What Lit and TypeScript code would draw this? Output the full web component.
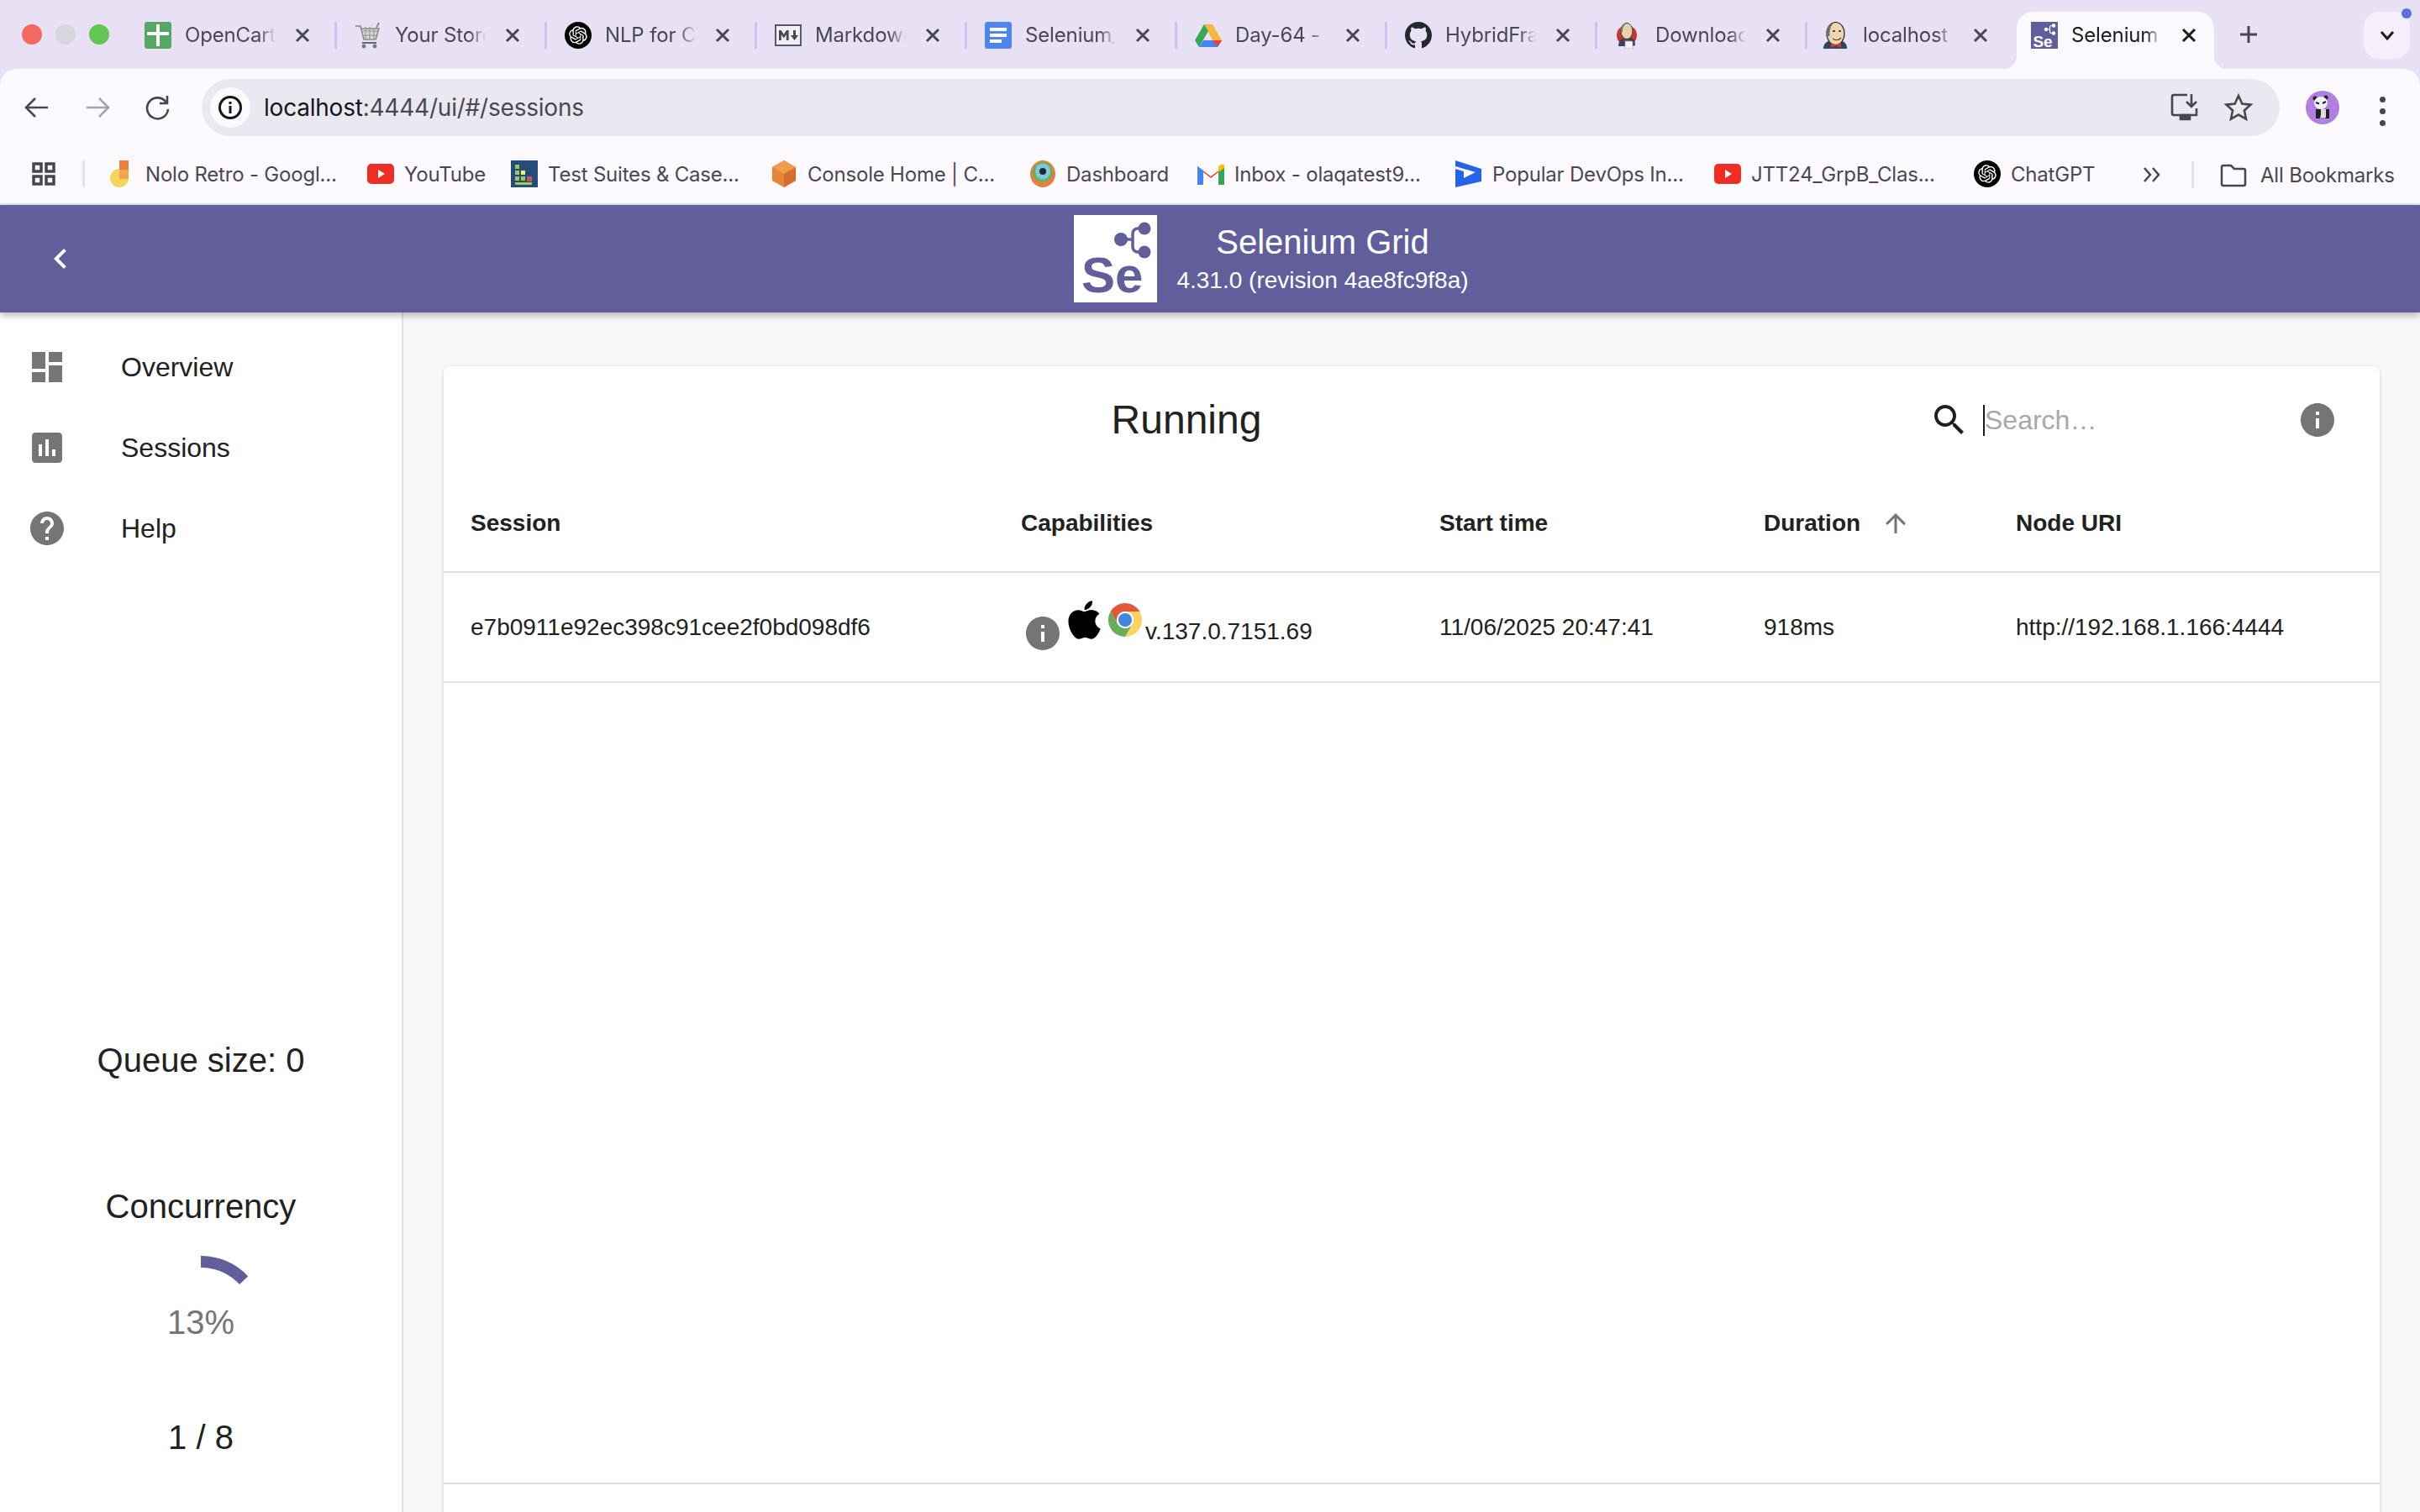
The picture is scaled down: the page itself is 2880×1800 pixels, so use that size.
import {LitElement, css, html, svg} from 'lit';
import {customElement} from 'lit/decorators.js';

const ICON = {
  dashboard: 'M3 13h8V3H3v10zm0 8h8v-6H3v6zm10 0h8V11h-8v10zm0-18v6h8V3h-8z',
  assessment: 'M19 3H5c-1.1 0-2 .9-2 2v14c0 1.1.9 2 2 2h14c1.1 0 2-.9 2-2V5c0-1.1-.9-2-2-2zM9 17H7v-7h2v7zm4 0h-2V7h2v10zm4 0h-2v-4h2v4z',
  help: 'M12 2C6.48 2 2 6.48 2 12s4.48 10 10 10 10-4.48 10-10S17.52 2 12 2zm1 17h-2v-2h2v2zm2.07-7.75l-.9.92C13.45 12.9 13 13.5 13 15h-2v-.5c0-1.1.45-2.1 1.17-2.83l1.24-1.26c.37-.36.59-.86.59-1.41 0-1.1-.9-2-2-2s-2 .9-2 2H8c0-2.21 1.79-4 4-4s4 1.79 4 4c0 .88-.36 1.68-.93 2.25z',
  info: 'M12 2C6.48 2 2 6.48 2 12s4.48 10 10 10 10-4.48 10-10S17.52 2 12 2zm1 15h-2v-6h2v6zm0-8h-2V7h2v2z',
  search: 'M15.5 14h-.79l-.28-.27C15.41 12.59 16 11.11 16 9.5 16 5.91 13.09 3 9.5 3S3 5.91 3 9.5 5.91 16 9.5 16c1.61 0 3.09-.59 4.23-1.57l.27.28v.79l5 4.99L20.49 19l-4.99-5zm-6 0C7.01 14 5 11.99 5 9.5S7.01 5 9.5 5 14 7.01 14 9.5 11.99 14 9.5 14z',
  up: 'M4 12l1.41 1.41L11 7.83V20h2V7.83l5.58 5.59L20 12l-8-8-8 8z',
  chevron: 'M15.41 7.41L14 6l-6 6 6 6 1.41-1.41L10.83 12z',
};

const GITHUB = 'M8 0C3.58 0 0 3.58 0 8c0 3.54 2.29 6.53 5.47 7.59.4.07.55-.17.55-.38 0-.19-.01-.82-.01-1.49-2.01.37-2.53-.49-2.69-.94-.09-.23-.48-.94-.82-1.13-.28-.15-.68-.52-.01-.53.63-.01 1.08.58 1.23.82.72 1.21 1.87.87 2.33.66.07-.52.28-.87.51-1.07-1.78-.2-3.64-.89-3.64-3.95 0-.87.31-1.59.82-2.15-.08-.2-.36-1.02.08-2.12 0 0 .67-.21 2.2.82.64-.18 1.32-.27 2-.27.68 0 1.36.09 2 .27 1.53-1.04 2.2-.82 2.2-.82.44 1.1.16 1.92.08 2.12.51.56.82 1.27.82 2.15 0 3.07-1.87 3.75-3.65 3.95.29.25.54.73.54 1.48 0 1.07-.01 1.93-.01 2.2 0 .21.15.46.55.38A8.013 8.013 0 0016 8c0-4.42-3.58-8-8-8z';
const OPENAI = 'M22.282 9.821a5.985 5.985 0 0 0-.516-4.91 6.046 6.046 0 0 0-6.51-2.9A6.065 6.065 0 0 0 4.981 4.18a5.985 5.985 0 0 0-3.998 2.9 6.046 6.046 0 0 0 .743 7.097 5.98 5.98 0 0 0 .51 4.911 6.051 6.051 0 0 0 6.515 2.9A5.985 5.985 0 0 0 13.26 24a6.056 6.056 0 0 0 5.772-4.206 5.99 5.99 0 0 0 3.997-2.9 6.056 6.056 0 0 0-.747-7.073zM13.26 22.43a4.476 4.476 0 0 1-2.876-1.04l.141-.081 4.779-2.758a.795.795 0 0 0 .392-.681v-6.737l2.02 1.168a.071.071 0 0 1 .038.052v5.583a4.504 4.504 0 0 1-4.494 4.494zM3.6 18.304a4.47 4.47 0 0 1-.535-3.014l.142.085 4.783 2.759a.771.771 0 0 0 .78 0l5.843-3.369v2.332a.08.08 0 0 1-.033.062L9.74 19.95a4.5 4.5 0 0 1-6.14-1.646zM2.34 7.896a4.485 4.485 0 0 1 2.366-1.973V11.6a.766.766 0 0 0 .388.676l5.815 3.355-2.02 1.168a.076.076 0 0 1-.071 0l-4.83-2.786A4.504 4.504 0 0 1 2.34 7.872zm16.597 3.855l-5.833-3.387L15.119 7.2a.076.076 0 0 1 .071 0l4.83 2.791a4.494 4.494 0 0 1-.676 8.105v-5.678a.79.79 0 0 0-.407-.667zm2.01-3.023l-.141-.085-4.774-2.782a.776.776 0 0 0-.785 0L9.409 9.23V6.897a.066.066 0 0 1 .028-.061l4.83-2.787a4.5 4.5 0 0 1 6.68 4.66zm-12.64 4.135l-2.02-1.164a.08.08 0 0 1-.038-.057V6.075a4.5 4.5 0 0 1 7.375-3.453l-.142.08L8.704 5.46a.795.795 0 0 0-.393.681zm1.097-2.365l2.602-1.5 2.607 1.5v2.999l-2.597 1.5-2.607-1.5z';
const APPLE = 'M318.7 268.7c-.2-36.7 16.4-64.4 50-84.8-18.8-26.9-47.2-41.7-84.7-44.6-35.5-2.8-74.3 20.7-88.5 20.7-15 0-49.4-19.7-76.4-19.7C63.3 141.2 4 184.8 4 273.5q0 39.3 14.4 81.2c12.8 36.7 59 126.7 107.2 125.2 25.2-.6 43-17.9 75.8-17.9 31.8 0 48.3 17.9 76.4 17.9 48.6-.7 90.4-82.5 102.6-119.3-65.2-30.7-61.7-90-61.7-91.9zm-56.6-164.2c27.3-32.4 24.8-61.9 24-72.5-24.1 1.4-52 16.4-67.9 34.9-17.5 19.8-27.8 44.3-25.6 71.9 26.1 2 49.9-11.4 69.5-34.3z';

// favicons, all on a 32 unit box
const mugIcon = svg`
  <circle cx="14" cy="16" r="12" fill="#c8352c"/>
  <path d="M4 29c0-6 4-10 9-10h4c5 0 7 3 7 9l-4 1z" fill="#2f4560"/>
  <ellipse cx="14" cy="11" rx="7" ry="9.500" fill="#ecd0ae" stroke="#3d3d3d" stroke-width="1"/>
  <path d="M7 12c-1-6 2-10 7-10-3 1-5 4-5 10z" fill="#777"/>
  <path d="M11 21l3 1.500 3-1.500v3.500l-3-1.500-3 1.500z" fill="#d33833"/>
  <rect x="12" y="23" width="9" height="9" rx="1" fill="#f4f4f4" stroke="#999" stroke-width=".6"/>`;

const jenkinsIcon = svg`
  <path d="M1 32c0-6 4-9 9-10h10c6 1 9 4 9 10z" fill="#2f4560"/>
  <ellipse cx="15.500" cy="14" rx="10.500" ry="13.500" fill="#f0d6b0" stroke="#2e2e2e" stroke-width="1.200"/>
  <path d="M5 17C3 8 8 1 15 .8 10 3 8 9 8.500 17z" fill="#6d6d6d"/>
  <path d="M12 20c3 2.500 7 2 10-1" fill="none" stroke="#5c3b2e" stroke-width="1.200"/>
  <path d="M12 11h3M19 11h3" stroke="#222" stroke-width="1.300"/>
  <path d="M10 25l6 2.500 6-2.500v6l-6-2.500-6 2.500z" fill="#d33833"/>`;

const openaiIcon = svg`<circle cx="16" cy="16" r="16" fill="#000"/><g transform="translate(5.2 5.2) scale(.9)"><path d="${OPENAI}" fill="#fff"/></g>`;

const seIcon = svg`
  <rect width="32" height="32" fill="#615e9b"/>
  <path d="M18 9h4M27 4.500h-2.500a2 2 0 0 0-2 2v5a2 2 0 0 0 2 2H27" fill="none" stroke="#fff" stroke-width="1.200"/>
  <circle cx="18" cy="9" r="2.200" fill="#fff"/><circle cx="27" cy="4.500" r="2.200" fill="#fff"/><circle cx="27" cy="13.500" r="2.200" fill="#fff"/>
  <text x="2.500" y="30" font-family="Liberation Sans" font-weight="700" font-size="19" fill="#fff">Se</text>`;

const FAV: Record<string, unknown> = {
  sheets: svg`<rect x="0" width="32" height="32" rx="3" fill="#57a764"/><path d="M14 3h4v9h11v4H18v13h-4V16H3v-4h11z" fill="#fff"/>`,
  cart: svg`<path d="M1 5h6l4 16h14l4-13H8" fill="#d6d6d6" stroke="#8b8b8b" stroke-width="1.600"/><path d="M10 11h17M11 16h15M13 6v14M18 6v14M23 7v13" stroke="#8f8f8f" stroke-width="1"/><path d="M29 1l-3 6" stroke="#8b8b8b" stroke-width="2"/><path d="M9 25h17" stroke="#666" stroke-width="2"/><circle cx="11" cy="29" r="2.400" fill="#777"/><circle cx="24" cy="29" r="2.400" fill="#777"/>`,
  openai: openaiIcon,
  md: svg`<rect x="1" y="4" width="30" height="24" fill="#f2eef8" stroke="#5b5862" stroke-width="2"/><path d="M5 22V10h2.600l3.200 5 3.200-5h2.600v12h-2.800v-7l-3 4.600-3-4.600v7z" fill="#4b4852"/><path d="M22 10h3v6h3l-4.500 6-4.500-6h3z" fill="#4b4852"/>`,
  docs: svg`<rect x="0" width="32" height="32" rx="3" fill="#4f86ec"/><rect x="6" y="7" width="20" height="4" fill="#fff"/><rect x="6" y="14" width="20" height="4" fill="#fff"/><rect x="6" y="21" width="14" height="4" fill="#fff"/>`,
  drive: svg`<path d="M11 3h10l11 19H21z" fill="#f4b83e"/><path d="M11 3L0 22l5 8 11-19z" fill="#34a853"/><path d="M5 30h22l5-8H10z" fill="#4285f4"/><path d="M21 22h11l-5 8z" fill="#ea4335"/>`,
  github: svg`<g transform="scale(2)"><path d="${GITHUB}" fill="#24292f"/></g>`,
  mug: mugIcon,
  jenkins: jenkinsIcon,
  selenium: seIcon,
  nolo: svg`<circle cx="13" cy="21" r="11" fill="#f2d55a"/><rect x="13" y="0" width="11" height="11" fill="#e8823a"/><rect x="13" y="11" width="11" height="11" fill="#f1a54c"/>`,
  youtube: svg`<rect y="4" width="32" height="24" rx="5" fill="#ee2d24"/><path d="M13 11l8 5-8 5z" fill="#fff"/>`,
  suites: svg`<rect width="32" height="32" fill="#264d79"/><rect x="5" y="5" width="5" height="5" fill="#9bc75b"/><rect x="5" y="12" width="5" height="5" fill="#9bc75b"/><rect x="5" y="19" width="5" height="5" fill="#9bc75b"/><rect x="12" y="19" width="5" height="5" fill="#9bc75b"/><rect x="12" y="12" width="5" height="5" fill="#f3ef74"/><rect x="19" y="19" width="6" height="6" fill="#c9545c"/><rect x="5" y="26" width="20" height="3" fill="#9bc75b"/>`,
  cube: svg`<path d="M16 0l14 8v16l-14 8-14-8V8z" fill="#e9853a"/><path d="M16 16l14-8v16l-14 8z" fill="#d66b2e"/><path d="M16 0l14 8-14 8L2 8z" fill="#f09c4e"/>`,
  dash: svg`<ellipse cx="16" cy="16" rx="15" ry="16" fill="#e4803f"/><ellipse cx="16" cy="14" rx="12" ry="12" fill="#6fae56"/><ellipse cx="16" cy="13" rx="9" ry="9.500" fill="#7fc6dc"/><circle cx="16" cy="13" r="4" fill="#1c2a33"/>`,
  gmail: svg`<path d="M0 7l16 12L32 7v22h-7V14l-9 7-9-7v15H0z" fill="#ea4335"/><path d="M0 7v22h7V12z" fill="#4285f4"/><path d="M25 12v17h7V7z" fill="#34a853"/><path d="M25 7v7l7-5V5c0-1-4-1-7 2z" fill="#fbbc04"/>`,
  dev: svg`<path d="M0 0l31 10v15L0 32z" fill="#2563eb"/><path d="M0 7l24 7-14 7v-8L0 10z" fill="#fdfaff"/>`,
};

const TABS = [
  {fav: 'sheets', title: 'OpenCart', width: 250},
  {fav: 'cart', title: 'Your Store', width: 250},
  {fav: 'openai', title: 'NLP for Cucumber', width: 250},
  {fav: 'md', title: 'Markdown', width: 250},
  {fav: 'docs', title: 'Selenium_', width: 250},
  {fav: 'drive', title: 'Day-64 - ', width: 250},
  {fav: 'github', title: 'HybridFramework', width: 250},
  {fav: 'mug', title: 'Download', width: 247},
  {fav: 'jenkins', title: 'localhost', width: 248},
  {fav: 'selenium', title: 'Selenium Grid', width: 235, active: true},
];

const BOOKMARKS = [
  {fav: 'nolo', title: 'Nolo Retro - Googl...', width: 308},
  {fav: 'youtube', title: 'YouTube', width: 171},
  {fav: 'suites', title: 'Test Suites & Case...', width: 309},
  {fav: 'cube', title: 'Console Home | C...', width: 308},
  {fav: 'dash', title: 'Dashboard', width: 200},
  {fav: 'gmail', title: 'Inbox - olaqatest9...', width: 307},
  {fav: 'dev', title: 'Popular DevOps In...', width: 308},
  {fav: 'youtube', title: 'JTT24_GrpB_Clas...', width: 309},
  {fav: 'openai', title: 'ChatGPT', width: 190},
];

const matIcon = (d: string, cls = '') => html`<svg class="mat ${cls}" viewBox="0 0 24 24"><path d="${d}"></path></svg>`;
const fav = (name: string) => html`<svg class="fav" viewBox="0 0 32 32">${FAV[name]}</svg>`;

@customElement('app-root')
export class AppRoot extends LitElement {
  static styles = css`
    :host {
      display: block;
      height: 1800px;
      overflow: hidden;
      font-family: 'Liberation Sans', Arial, sans-serif;
      color: #212121;
      background: #f6f8f7;
    }

    /* browser chrome */
    .strip {
      display: flex;
      height: 82px;
      background: #e8e0f4;
      position: relative;
    }
    .lights {
      display: flex;
      gap: 16px;
      width: 155px;
      padding: 29px 0 0 26px;
      box-sizing: border-box;
    }
    .light { width: 24px; height: 24px; border-radius: 50%; }
    .tab {
      height: 68px;
      margin-top: 14px;
      padding: 12px 0 0 17px;
      box-sizing: border-box;
      display: flex;
      align-items: flex-start;
      position: relative;
      flex: none;
      font-family: Inter, 'Liberation Sans', sans-serif;
      font-size: 24px;
      letter-spacing: -0.15px;
      color: #4a4754;
    }
    .tab::after {
      content: '';
      position: absolute;
      left: 243px;
      top: 12px;
      width: 3px;
      height: 32px;
      background: #cfc3f5;
    }
    .tab.last::after, .tab.active::after { display: none; }
    .tab.active {
      background: #fdfaff;
      border-radius: 20px 20px 0 0;
      color: #1d1b22;
    }
    .tab.active::before {
      content: '';
      position: absolute;
      left: -16px;
      right: -16px;
      bottom: 0;
      height: 16px;
      background:
        radial-gradient(circle at 0 0, #e8e0f4 16px, #fdfaff 16.5px) left / 16px 16px no-repeat,
        radial-gradient(circle at 100% 0, #e8e0f4 16px, #fdfaff 16.5px) right / 16px 16px no-repeat;
    }
    .fav { width: 32px; height: 32px; flex: none; display: block; }
    .tab-title {
      width: 108px;
      margin-left: 16px;
      line-height: 32px;
      white-space: nowrap;
      overflow: hidden;
      -webkit-mask-image: linear-gradient(90deg, #000 82%, transparent 100%);
      mask-image: linear-gradient(90deg, #000 82%, transparent 100%);
    }
    .tab-x { width: 20px; height: 20px; margin: 6px 0 0 22px; flex: none; }
    .tab-x path { stroke: currentColor; stroke-width: 3; fill: none; }
    .new-tab { width: 24px; height: 24px; position: absolute; left: 2664px; top: 29px; }
    .tab-menu {
      position: absolute;
      left: 2813px;
      top: 14px;
      width: 55px;
      height: 56px;
      background: #f4effb;
      border-radius: 18px;
      display: flex;
      align-items: center;
      justify-content: center;
    }
    .tab-menu::after {
      content: '';
      position: absolute;
      right: -2px;
      top: -4px;
      width: 12px;
      height: 12px;
      border-radius: 50%;
      background: #5b6ee8;
    }

    .toolbar-wrap { background: #e8e0f4; }
    .toolbar {
      height: 80px;
      background: #fdfaff;
      border-radius: 20px 20px 0 0;
      position: relative;
    }
    .tool { position: absolute; top: 28px; width: 36px; height: 36px; fill: none; stroke: #47454f; stroke-width: 2.6; }
    .omni {
      position: absolute;
      left: 240px;
      top: 12px;
      width: 2473px;
      height: 68px;
      border-radius: 34px;
      background: #eae9f1;
      display: flex;
      align-items: center;
    }
    .omni-info {
      width: 48px;
      height: 48px;
      margin-left: 10px;
      border-radius: 50%;
      background: #fdfaff;
      display: flex;
      align-items: center;
      justify-content: center;
    }
    .url {
      margin-left: 16px;
      font-family: Inter, 'Liberation Sans', sans-serif;
      font-size: 28px;
      color: #4a4754;
      letter-spacing: -0.22px;
    }
    .url b { font-weight: 400; color: #17151c; }
    .avatar { position: absolute; left: 2744px; top: 26px; width: 40px; height: 40px; }
    .kebab { position: absolute; left: 2832px; top: 33px; display: flex; flex-direction: column; gap: 7px; }
    .kebab i { width: 7px; height: 7px; border-radius: 50%; background: #47454f; }

    .bookmarks {
      height: 82px;
      padding: 10px 0 0;
      box-sizing: border-box;
      background: #fdfaff;
      border-bottom: 2px solid #e9e4ef;
      display: flex;
      align-items: center;
      font-family: Inter, 'Liberation Sans', sans-serif;
      font-size: 24px;
      letter-spacing: -0.2px;
      color: #4a4754;
      position: relative;
    }
    .apps { width: 28px; height: 28px; margin-left: 38px; fill: none; stroke: #47454f; stroke-width: 3.500; }
    .bm-sep { width: 3px; height: 32px; background: #e5dff8; margin: 0 28px 0 32px; flex: none; }
    .bm { display: flex; align-items: center; gap: 12px; flex: none; white-space: nowrap; }
    .bm-more { position: absolute; left: 2549px; top: 36px; width: 24px; height: 20px; fill: none; stroke: #47454f; stroke-width: 2.500; }
    .bm-all {
      position: absolute;
      left: 2642px;
      top: 30px;
      display: flex;
      align-items: center;
      gap: 16px;
    }
    .bm-all svg { width: 32px; height: 32px; fill: none; stroke: #47454f; stroke-width: 2.500; }
    .bm-line { position: absolute; left: 2608px; top: 30px; width: 3px; height: 32px; background: #e5dff8; }

    /* app */
    .app-bar {
      height: 128px;
      background: #615e9b;
      color: #fff;
      display: flex;
      align-items: center;
      padding-left: 26px;
      position: relative;
      z-index: 2;
      box-shadow: 0 4px 8px rgba(0, 0, 0, 0.25);
    }
    .back { width: 96px; height: 96px; margin: 0 24px 0 -2px; display: flex; align-items: center; justify-content: center; flex: none; }
    .back svg { width: 48px; height: 48px; fill: #fff; }
    .brand { flex: 1; display: flex; align-items: center; justify-content: center; gap: 23px; padding-left: 2px; }
    .logo { width: 99px; height: 104px; background: #fff; display: block; }
    .brand-text { text-align: center; padding-top: 2px; }
    .brand-title { font-size: 40px; line-height: 47px; }
    .brand-sub { font-size: 28px; line-height: 40px; margin-top: 2px; }

    .body { display: flex; height: 1428px; }
    .side {
      width: 480px;
      flex: none;
      box-sizing: border-box;
      background: #fff;
      border-right: 2px solid #e0e0e0;
      display: flex;
      flex-direction: column;
    }
    .nav { padding-top: 17px; }
    .nav-item { height: 96px; display: flex; align-items: center; font-size: 32px; padding-left: 32px; }
    .nav-item .mat { width: 48px; height: 48px; fill: #757575; margin-right: 64px; }
    .stats { margin-top: 562px; text-align: center; font-size: 40px; }
    .stat-line { line-height: 46px; }
    .concurrency { margin-top: 128px; }
    .gauge { width: 160px; height: 160px; margin: 33px auto 0; position: relative; }
    .gauge svg { width: 160px; height: 160px; display: block; }
    .gauge-label {
      position: absolute;
      inset: 0;
      display: flex;
      align-items: center;
      justify-content: center;
      color: #757575;
      padding-top: 4px;
      box-sizing: border-box;
    }
    .ratio { margin-top: 36px; }

    .main { flex: 1; padding: 64px 48px 0; }
    .card {
      height: 1500px;
      background: #fff;
      border-radius: 8px;
      box-shadow: 0 1px 4px rgba(0, 0, 0, 0.16);
      position: relative;
    }
    .card-bar { height: 130px; display: flex; align-items: center; }
    .card-title { flex: none; width: 1768px; text-align: center; font-size: 48px; line-height: 56px; font-weight: 400; margin: 0 0 2px; }
    .search { display: flex; align-items: center; margin-bottom: 2px; }
    .search .mat { width: 48px; height: 48px; fill: #1f1f1f; }
    .search input {
      width: 376px;
      height: 37px;
      margin-left: 16px;
      border: 0;
      border-left: 2px solid #1b1b1b;
      padding: 0;
      outline: none;
      font: 32px 'Liberation Sans', sans-serif;
      background: transparent;
    }
    .search input::placeholder { color: #a8a8a8; opacity: 1; }
    .search .card-info { fill: #757575; margin-left: -4px; }

    .row {
      display: grid;
      grid-template-columns: 655px 498px 386px 300px 465px;
      font-size: 28px;
      border-bottom: 2px solid #e0e0e0;
    }
    .cell { padding-left: 32px; display: flex; align-items: center; }
    .head { height: 116px; font-weight: 700; box-sizing: border-box; }
    .sort { width: 36px; height: 36px; fill: #757575; margin-left: 24px; }
    .data { height: 131px; box-sizing: border-box; }
    .caps { align-items: flex-start; padding-top: 32px; }
    .caps .info { width: 40px; height: 40px; margin: 20px 10px 0 6px; }
    .caps .info path { fill: #757575; }
    .caps .apple { width: 39px; height: 48px; margin-right: 9px; }
    .caps .chrome { width: 40px; height: 40px; margin: 4px 4px 0 0; }
    .caps span { margin-top: 22px; line-height: 32px; }
    .foot { position: absolute; left: 0; right: 0; top: 1329px; height: 2px; background: #e0e0e0; }
  `;

  render() {
    return html`
      <div class="strip">
        <div class="lights">
          <div class="light" style="background:#f3685f"></div>
          <div class="light" style="background:#d8d5de"></div>
          <div class="light" style="background:#62c554"></div>
        </div>
        ${TABS.map((t, i) => html`
          <div class="tab ${t.active ? 'active' : ''} ${i === 8 ? 'last' : ''}" style="width:${t.width}px">
            ${fav(t.fav)}
            <div class="tab-title">${t.title}</div>
            <svg class="tab-x" viewBox="0 0 20 20"><path d="M3 3l14 14M17 3L3 17"></path></svg>
          </div>
        `)}
        <svg class="new-tab" viewBox="0 0 24 24"><path d="M12 2v20M2 12h20" stroke="#47454f" stroke-width="3" fill="none"></path></svg>
        <div class="tab-menu">
          <svg width="20" height="14" viewBox="0 0 20 14"><path d="M3 3l7 8 7-8" stroke="#1d1b22" stroke-width="3" fill="none"></path></svg>
        </div>
      </div>

      <div class="toolbar-wrap">
        <div class="toolbar">
          <svg class="tool" style="left:26px" viewBox="0 0 36 36"><path d="M31 18H6M16 7L5 18l11 11"></path></svg>
          <svg class="tool" style="left:98px;stroke:#a7a5ad" viewBox="0 0 36 36"><path d="M5 18h25M20 7l11 11-11 11"></path></svg>
          <svg class="tool" style="left:170px" viewBox="0 0 36 36"><path d="M28 12a12.500 12.500 0 1 0 2 8M29 4v9h-9"></path></svg>
          <div class="omni">
            <div class="omni-info">
              <svg width="30" height="30" viewBox="0 0 30 30"><circle cx="15" cy="15" r="12.500" fill="none" stroke="#17151c" stroke-width="3"></circle><path d="M15 13v9M15 8v3" stroke="#17151c" stroke-width="3"></path></svg>
            </div>
            <div class="url"><b>localhost</b>:4444/ui/#/sessions</div>
          </div>
          <svg class="tool" style="left:2582px" viewBox="0 0 36 36"><path d="M21 3H5a2 2 0 0 0-2 2v20a2 2 0 0 0 2 2h27V19"></path><path d="M13 27h11v5H13z" fill="#47454f"></path><path d="M26 2v14M20 11l6 6 6-6"></path></svg>
          <svg class="tool" style="left:2646px" viewBox="0 0 36 36"><path d="M18 4l4.300 9.500 10.200 1.100-7.600 6.900 2.100 10.100L18 26.500 9 31.600l2.100-10.100-7.600-6.900 10.200-1.100z"></path></svg>
          <svg class="avatar" viewBox="0 0 40 40">
            <circle cx="20" cy="20" r="20" fill="#b07fdf"></circle>
            <circle cx="11" cy="9" r="2.500" fill="#222"></circle><circle cx="24" cy="8" r="2.500" fill="#222"></circle>
            <ellipse cx="18" cy="14.500" rx="8" ry="7.500" fill="#f4f4f4"></ellipse>
            <path d="M12 14l4 1.500M24 13l-4 2" stroke="#222" stroke-width="2.200"></path>
            <path d="M12 22h16v11h-5v-3h-6v3h-5z" fill="#222"></path>
            <rect x="18" y="22" width="6" height="10" fill="#ddd"></rect>
          </svg>
          <div class="kebab"><i></i><i></i><i></i></div>
        </div>
      </div>

      <div class="bookmarks">
        <svg class="apps" viewBox="0 0 28 28"><path d="M2 2h9v9H2zM17 2h9v9h-9zM2 17h9v9H2zM17 17h9v9h-9z"></path></svg>
        <div class="bm-sep"></div>
        ${BOOKMARKS.map(b => html`
          <div class="bm" style="width:${b.width}px">${fav(b.fav)}<span>${b.title}</span></div>
        `)}
        <svg class="bm-more" viewBox="0 0 24 20"><path d="M3 2l7 8-7 8M13 2l7 8-7 8"></path></svg>
        <div class="bm-line"></div>
        <div class="bm-all">
          <svg viewBox="0 0 32 32"><path d="M2 7a2 2 0 0 1 2-2h9l4 4h11a2 2 0 0 1 2 2v16a2 2 0 0 1-2 2H4a2 2 0 0 1-2-2z"></path></svg>
          <span>All Bookmarks</span>
        </div>
      </div>

      <header class="app-bar">
        <div class="back">${matIcon(ICON.chevron)}</div>
        <div class="brand">
          <svg class="logo" viewBox="0 0 99 104">
            <path d="M56 29H70M84 16H76a6 6 0 0 0-6 6v16a6 6 0 0 0 6 6h8" fill="none" stroke="#615e9b" stroke-width="3.500"></path>
            <circle cx="56" cy="29" r="8" fill="#615e9b"></circle>
            <circle cx="84" cy="16" r="7.500" fill="#615e9b"></circle>
            <circle cx="84" cy="44" r="7.500" fill="#615e9b"></circle>
            <text x="9" y="92" font-family="Liberation Sans" font-weight="700" font-size="60" fill="#615e9b">Se</text>
          </svg>
          <div class="brand-text">
            <div class="brand-title">Selenium Grid</div>
            <div class="brand-sub">4.31.0 (revision 4ae8fc9f8a)</div>
          </div>
        </div>
      </header>

      <div class="body">
        <aside class="side">
          <nav class="nav">
            <div class="nav-item">${matIcon(ICON.dashboard)}Overview</div>
            <div class="nav-item">${matIcon(ICON.assessment)}Sessions</div>
            <div class="nav-item">${matIcon(ICON.help)}Help</div>
          </nav>
          <div class="stats">
            <div class="stat-line">Queue size: 0</div>
            <div class="stat-line concurrency">Concurrency</div>
            <div class="gauge">
              <svg viewBox="0 0 160 160">
                <circle cx="80" cy="80" r="70" fill="none" stroke="#615e9b" stroke-width="14"
                  stroke-dasharray="57.200 440" transform="rotate(-90 80 80)"></circle>
              </svg>
              <div class="gauge-label">13%</div>
            </div>
            <div class="stat-line ratio">1 / 8</div>
          </div>
        </aside>

        <main class="main">
          <section class="card">
            <div class="card-bar">
              <h2 class="card-title">Running</h2>
              <div class="search">
                ${matIcon(ICON.search)}
                <input placeholder="Search…" />
                ${matIcon(ICON.info, 'card-info')}
              </div>
            </div>
            <div class="row head">
              <div class="cell">Session</div>
              <div class="cell">Capabilities</div>
              <div class="cell">Start time</div>
              <div class="cell">Duration ${matIcon(ICON.up, 'sort')}</div>
              <div class="cell">Node URI</div>
            </div>
            <div class="row data">
              <div class="cell">e7b0911e92ec398c91cee2f0bd098df6</div>
              <div class="cell caps">
                <svg class="info" viewBox="2 2 20 20"><path d="${ICON.info}"></path></svg>
                <svg class="apple" viewBox="0 20 384 472"><path d="${APPLE}"></path></svg>
                <svg class="chrome" viewBox="4 4 40 40">
                  <path d="M6.680 14A20 20 0 0 1 41.320 14H24A10 10 0 0 0 15.340 29Z" fill="#e2593a"></path>
                  <path d="M41.320 14A20 20 0 0 1 24 44L32.660 29A10 10 0 0 0 24 14Z" fill="#fbd35e"></path>
                  <path d="M24 44A20 20 0 0 1 6.680 14L15.340 29A10 10 0 0 0 32.660 29Z" fill="#66ad5c"></path>
                  <circle cx="24" cy="24" r="10" fill="#fff"></circle>
                  <circle cx="24" cy="24" r="8" fill="#4086df"></circle>
                </svg>
                <span>v.137.0.7151.69</span>
              </div>
              <div class="cell">11/06/2025 20:47:41</div>
              <div class="cell">918ms</div>
              <div class="cell">http://192.168.1.166:4444</div>
            </div>
            <div class="foot"></div>
          </section>
        </main>
      </div>
    `;
  }
}
